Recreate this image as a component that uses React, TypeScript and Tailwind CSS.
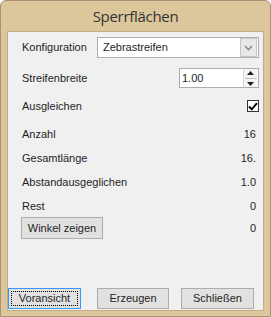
import React from 'react';

const font = { fontFamily: '"Liberation Sans", Arial, sans-serif' };

const Row: React.FC<{ label: string; className?: string; children?: React.ReactNode }> = ({ label, className, children }) => (
  <div className={`flex items-center justify-between pl-[14px] pr-[7px] ${className ?? ''}`}>
    <span>{label}</span>
    {children}
  </div>
);

const Button: React.FC<{ label: string; focused?: boolean; className?: string }> = ({ label, focused, className }) => (
  <button
    className={`h-[21px] flex items-center justify-center bg-[#e1e1e1] text-[11px] text-[#1e1e1e] ${
      focused ? 'border border-[#3399ff] p-[2px]' : 'border border-[#adadad]'
    } ${className ?? ''}`}
  >
    {focused ? (
      <span className="w-full h-full border border-dotted border-black flex items-center justify-center">{label}</span>
    ) : (
      label
    )}
  </button>
);

export default function App() {
  return (
    <div
      className="w-[271px] h-[317px] bg-[#dcc69c] border border-[#a99275] rounded-t-[6px] flex flex-col"
      style={font}
    >
      <div
        className="h-[30px] flex items-center justify-center text-[15px] text-[#333333]"
        style={{ fontFamily: '"Open Sans", "Noto Sans", sans-serif', letterSpacing: '-0.3px' }}
      >
        Sperrflächen
      </div>

      <div className="ml-[6px] mr-[6px] mb-[5px] flex-1 bg-[#f0f0f0] border border-[#c4ad86] flex flex-col pt-[5px] pb-[1px] text-[11px] text-[#1e1e1e]">
        <div className="flex items-center h-[21px] pl-[14px] pr-[4px]">
          <span className="w-[75px]">Konfiguration</span>
          <div className="flex-1 h-[21px] bg-white border border-[#abadb3] flex items-center justify-between pl-[5px] pr-[1px]">
            <span>Zebrastreifen</span>
            <div className="w-[17px] h-[19px] bg-[#e8e8e8] border border-[#c6c6c6] flex items-center justify-center">
              <svg width="9" height="6" viewBox="0 0 9 6">
                <path d="M1 1 L4.5 4.5 L8 1" stroke="#8a8a8a" strokeWidth="1.6" fill="none" />
              </svg>
            </div>
          </div>
        </div>

        <Row label="Streifenbreite" className="h-[20px] mt-[10px] !pr-[4px]">
          <div className="w-[80px] h-[20px] bg-white border border-[#abadb3] flex items-center justify-between pl-[2px]">
            <span>1.00</span>
            <div className="w-[14px] h-[18px] mr-[1px] bg-[#f4f4f4] border-l border-[#d6d6d6] flex flex-col items-center justify-center gap-[3px]">
              <svg width="7" height="4" viewBox="0 0 7 4">
                <path d="M0 4 L3.5 0 L7 4 Z" fill="#1e1e1e" />
              </svg>
              <div className="w-[12px] h-px bg-[#bdbdbd]" />
              <svg width="7" height="4" viewBox="0 0 7 4">
                <path d="M0 0 L3.5 4 L7 0 Z" fill="#1e1e1e" />
              </svg>
            </div>
          </div>
        </Row>

        <Row label="Ausgleichen" className="h-[20px] mt-[8px] !pr-[4px]">
          <div className="w-[12px] h-[12px] bg-white border border-[#333] flex items-center justify-center">
            <svg width="10" height="9" viewBox="0 0 10 9">
              <path d="M1 4.5 L3.8 7.3 L9 1.2" stroke="#000" strokeWidth="2" fill="none" />
            </svg>
          </div>
        </Row>

        <Row label="Anzahl" className="h-[20px] mt-[8px]">
          <span>16</span>
        </Row>
        <Row label="Gesamtlänge" className="h-[20px] mt-[4px]">
          <span>16.</span>
        </Row>
        <Row label="Abstandausgeglichen" className="h-[20px] mt-[4px]">
          <span>1.0</span>
        </Row>
        <Row label="Rest" className="h-[20px] mt-[4px]">
          <span>0</span>
        </Row>
        <div className="flex items-center justify-between h-[22px] mt-[1px] pl-[13px] pr-[7px]">
          <Button label="Winkel zeigen" className="w-[82px] h-[22px]" />
          <span>0</span>
        </div>

        <div className="mt-auto flex items-center pl-0 pr-[9px]">
          <Button label="Voransicht" focused className="w-[73px]" />
          <Button label="Erzeugen" className="w-[72px] ml-[16px]" />
          <Button label="Schließen" className="w-[73px] ml-[12px]" />
        </div>
      </div>
    </div>
  );
}
